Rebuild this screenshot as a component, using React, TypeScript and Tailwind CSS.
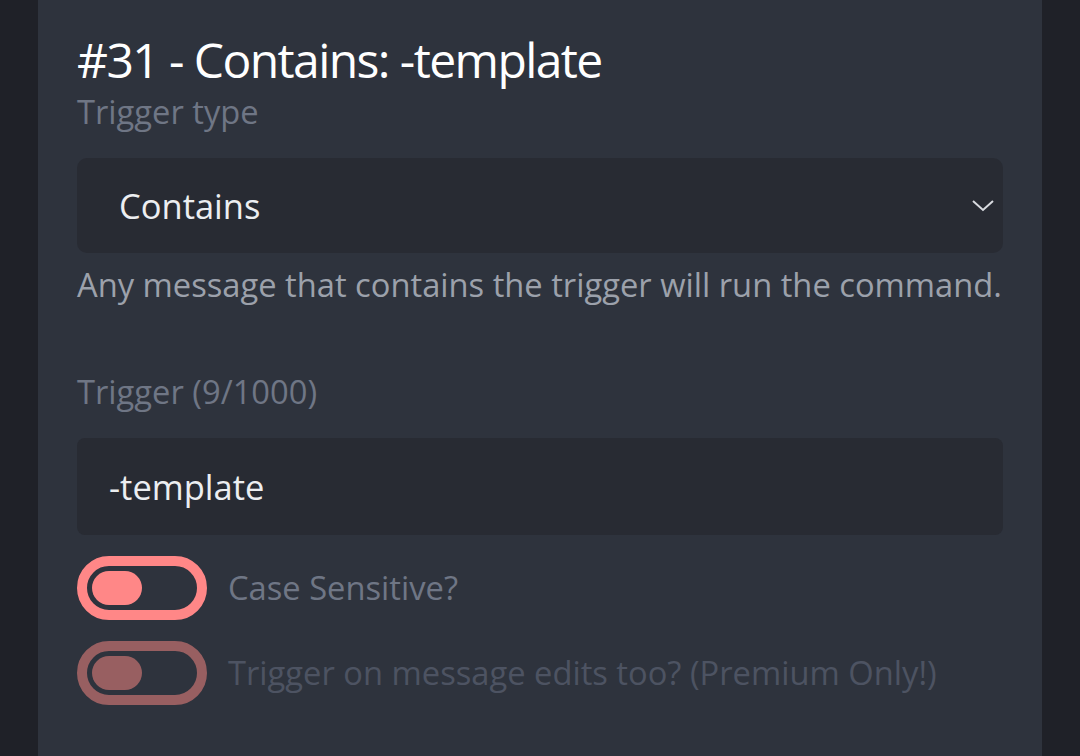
import React from "react";

function Toggle({ dim }: { dim?: boolean }) {
  return (
    <div
      className={`w-[130px] h-[64px] rounded-full border-[10px] flex items-center pl-[5px] shrink-0 ${
        dim ? "border-[#985f61]" : "border-[#ff8787]"
      }`}
    >
      <div className={`w-[50px] h-[34px] rounded-full ${dim ? "bg-[#985f61]" : "bg-[#ff8787]"}`} />
    </div>
  );
}

export default function App() {
  return (
    <div
      className="w-[1080px] h-[756px] bg-[#1f2128] flex overflow-hidden"
      style={{ fontFamily: '"Open Sans", "Noto Sans", sans-serif' }}
    >
      <div className="ml-[38px] w-[1004px] h-full bg-[#2e333d] pl-[39px] pr-[39px] flex flex-col">
        <h1 className="mt-[30px] text-[48px] leading-[60px] text-white tracking-[-0.033em] font-medium">
          #31 - Contains: -template
        </h1>
        <div className="text-[32.7px] leading-[44px] text-[#6f7685]">Trigger type</div>
        <div className="mt-[24px] h-[95px] rounded-[10px] bg-[#282b33] flex items-center justify-between pl-[42px] pr-[10px]">
          <span className="text-[34.5px] text-[#eceef1]">Contains</span>
          <svg width="24" height="24" viewBox="0 0 24 24" className="mr-[-2px]">
            <path d="M2 7 L12 16 L22 7" fill="none" stroke="#d9dbe0" strokeWidth="2" />
          </svg>
        </div>
        <div className="mt-[10px] text-[32.7px] leading-[44px] text-[#9ca1ab] whitespace-nowrap">
          Any message that contains the trigger will run the command.
        </div>
        <div className="mt-[63px] text-[32.7px] leading-[44px] text-[#6f7685]">Trigger (9/1000)</div>
        <div className="mt-[24px] h-[97px] rounded-[8px] bg-[#282b33] flex items-center pl-[32px]">
          <span className="text-[34.5px] text-[#eceef1]">-template</span>
        </div>
        <div className="mt-[21px] flex items-center gap-[21px]">
          <Toggle />
          <span className="text-[32.7px] text-[#6f7685]">Case Sensitive?</span>
        </div>
        <div className="mt-[21px] flex items-center gap-[21px]">
          <Toggle dim />
          <span className="text-[32.7px] text-[#4d5362]">Trigger on message edits too? (Premium Only!)</span>
        </div>
      </div>
    </div>
  );
}
